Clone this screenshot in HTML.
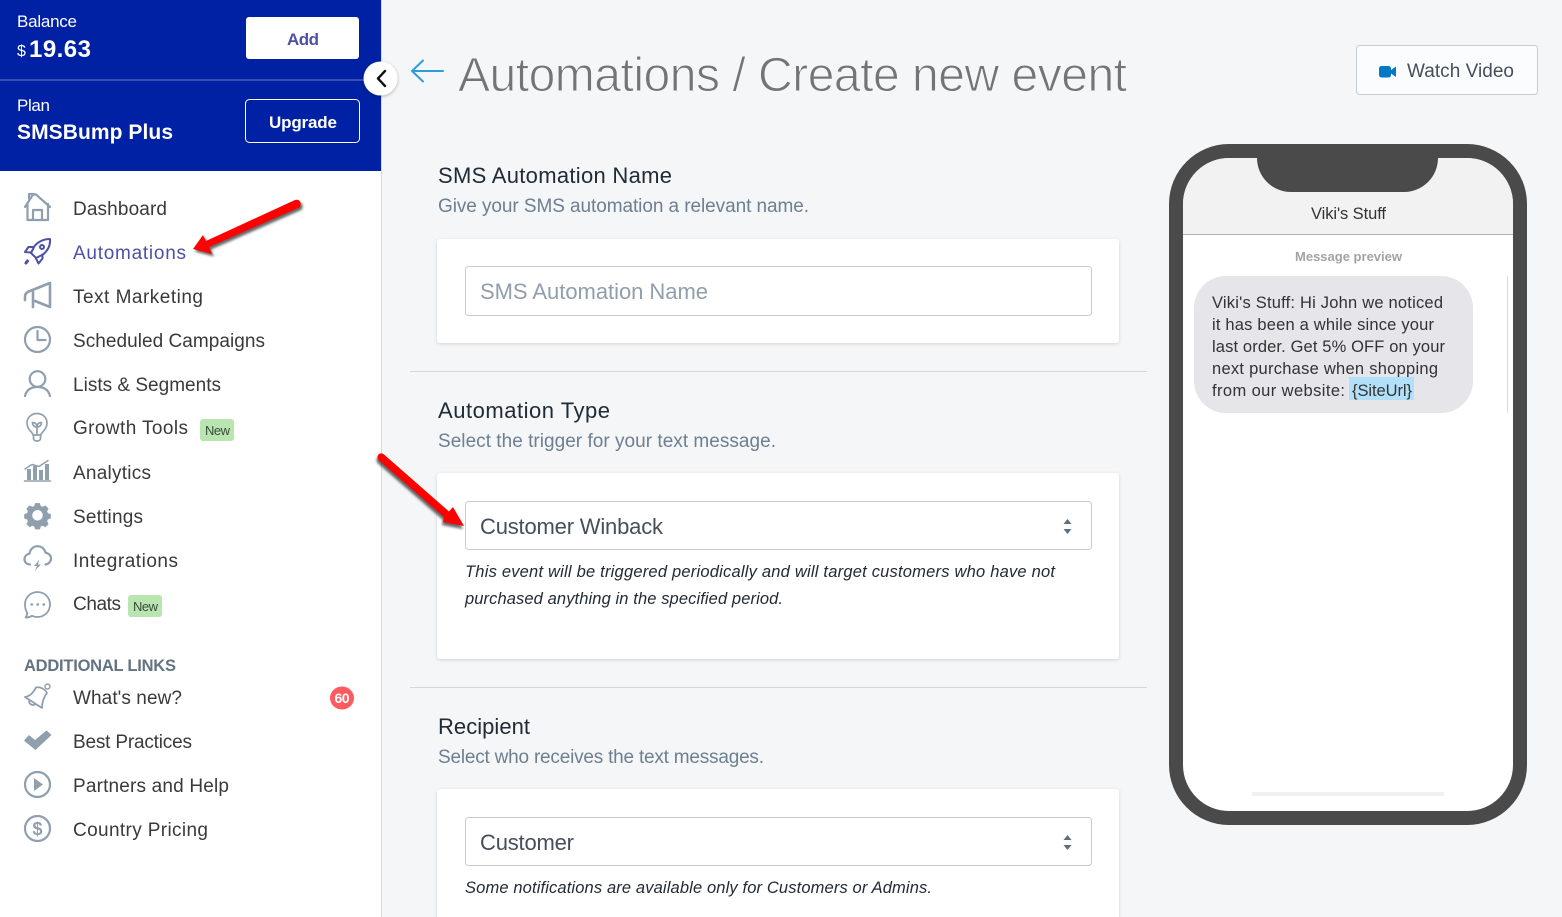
<!DOCTYPE html>
<html><head><meta charset="utf-8"><title>Automations</title>
<style>
html,body{margin:0;padding:0;background:#f4f6f8;width:1562px;height:917px;overflow:hidden}
svg{display:block}
text{font-family:"Liberation Sans",sans-serif}
.n{font-size:19px;fill:#3a3a3a}
.h{font-size:22px;fill:#212b36}
.s{font-size:19px;fill:#6d7f90}
.f{font-size:22px;fill:#454f5b}
.i{font-size:16.5px;font-style:italic;fill:#212b36}
.m{font-size:16.5px;fill:#333}
.ic{fill:none;stroke:#8f9fae;stroke-width:2.2;stroke-linecap:round;stroke-linejoin:round}
.card{fill:#fff;filter:url(#cs)}
.inp{fill:#fff;stroke:#c4cdd5;stroke-width:1}
.ar{fill:#5f6f80}
</style></head><body>
<svg width="1562" height="917" viewBox="0 0 1562 917" xmlns="http://www.w3.org/2000/svg">
<defs>
<filter id="cs" x="-5%" y="-10%" width="110%" height="120%"><feDropShadow dx="0" dy="1" stdDeviation="1.5" flood-color="#3f3f44" flood-opacity=".2"/></filter>
<filter id="ds" x="-30%" y="-30%" width="160%" height="160%"><feGaussianBlur stdDeviation="1.4"/></filter>
<filter id="cc" x="-40%" y="-40%" width="180%" height="180%"><feDropShadow dx="0" dy="1" stdDeviation="1.5" flood-color="#000" flood-opacity=".3"/></filter>
</defs>
<rect width="1562" height="917" fill="#f4f6f8"/>

<!-- sidebar -->
<rect x="0" y="0" width="381" height="917" fill="#fff"/>
<rect x="381" y="0" width="1" height="917" fill="#d5d8dc"/>
<rect x="0" y="0" width="381" height="171" fill="#0021a3"/>
<rect x="0" y="79" width="381" height="2" fill="#3c50b3"/>
<text x="17" y="27" font-size="17" fill="#fff" textLength="60">Balance</text>
<text x="17" y="56" font-size="16" fill="#fff" textLength="8">$</text>
<text x="29" y="57" font-size="24" font-weight="700" fill="#fff" textLength="62">19.63</text>
<rect x="246" y="17" width="113" height="42" rx="3" fill="#fff"/>
<text x="287" y="45" font-size="17" font-weight="700" fill="#4c51a5" textLength="32">Add</text>
<text x="17" y="111" font-size="17" fill="#fff" textLength="33">Plan</text>
<text x="17" y="139" font-size="21" font-weight="700" fill="#fff" textLength="156">SMSBump Plus</text>
<rect x="245.500" y="99.500" width="114" height="43" rx="4" fill="none" stroke="#fff"/>
<text x="269" y="128" font-size="17" font-weight="700" fill="#fff" textLength="68">Upgrade</text>

<circle cx="380.500" cy="78.500" r="17" fill="#fff" filter="url(#cc)"/>
<path d="M385 71l-7 7.500 7 7.500" fill="none" stroke="#111" stroke-width="2.400" stroke-linecap="round" stroke-linejoin="round"/>

<!-- nav labels -->
<text class="n" x="73" y="215" textLength="94">Dashboard</text>
<text class="n" x="73" y="259" textLength="113" style="fill:#4c51a5">Automations</text>
<text class="n" x="73" y="303" textLength="130">Text Marketing</text>
<text class="n" x="73" y="347" textLength="192">Scheduled Campaigns</text>
<text class="n" x="73" y="391" textLength="148">Lists &amp; Segments</text>
<text class="n" x="73" y="434" textLength="115">Growth Tools</text>
<text class="n" x="73" y="479" textLength="78">Analytics</text>
<text class="n" x="73" y="523" textLength="70">Settings</text>
<text class="n" x="73" y="567" textLength="105">Integrations</text>
<text class="n" x="73" y="610" textLength="48">Chats</text>
<text x="24" y="671" font-size="16.500" font-weight="700" fill="#637381" textLength="152">ADDITIONAL LINKS</text>
<text class="n" x="73" y="704" textLength="109">What's new?</text>
<text class="n" x="73" y="748" textLength="119">Best Practices</text>
<text class="n" x="73" y="792" textLength="156">Partners and Help</text>
<text class="n" x="73" y="836" textLength="135">Country Pricing</text>

<rect x="200" y="419" width="34" height="22" rx="3" fill="#b8e5b0"/>
<text x="205" y="435" font-size="13" fill="#3a4a3a" textLength="25">New</text>
<rect x="128" y="595" width="34" height="22" rx="3" fill="#b8e5b0"/>
<text x="133" y="611" font-size="13" fill="#3a4a3a" textLength="25">New</text>
<ellipse cx="342" cy="698" rx="12" ry="11.500" fill="#fd5b5f"/>
<text x="342" y="703" font-size="14" font-weight="700" fill="#fff" text-anchor="middle" textLength="15">60</text>

<!-- icons -->
<g class="ic">
<path d="M25 207L33 194.500h3L50 207M27.500 204V220H48V204M33 220V210H42V220M29 198.500V194H34"/>
<g style="stroke:#4c51a5;stroke-width:2">
<path d="M50 239c.5 6-1.500 11-7 15.500l-7 3.500-5-5 3.500-7c4.500-5 9.500-7 15.500-7z"/>
<path d="M32.500 247h-4l-3.500 5 6 .5M42.500 254.500v4l-4 5-2.500-5"/>
<circle cx="42" cy="247" r="2"/>
<path d="M27.500 261l-1.500 2" stroke-width="3"/>
</g>
<path d="M50 283V307L35 301M50 283L30 291C26.500 292 25 294 25 297V300M33 292V307" style="stroke-width:2.600"/>
<circle cx="37.500" cy="339.500" r="12.500"/>
<path d="M37.500 331v9h8"/>
<circle cx="37.500" cy="379" r="7.800"/>
<path d="M25 396c1.500-6 6-9 12.500-9s11 3 12.500 9"/>
<path d="M33 435c0-3-6-5-6-12 0-5.500 4.500-9.500 10-9.500s10 4 10 9.500c0 7-6 9-6 12zM33.500 435v3.500c0 1.500 1.500 2.500 3.500 2.500s3.500-1 3.500-2.500V435M37 435v-8M37 427c-3 0-4.500-2-4.500-4.500 2.500 0 4.500 1.500 4.500 4.500zM37 427c3 0 4.500-2 4.500-4.500-2.500 0-4.500 1.500-4.500 4.500z" style="stroke-width:1.700"/>
<path d="M24.500 481h26" style="stroke-width:1.500"/>
<path d="M25 469l7-4.500 7 2 9-6" style="stroke-width:1.500"/>
</g>
<g fill="#8f9fae">
<rect x="27" y="469" width="4" height="11"/><rect x="33" y="466" width="4" height="14"/><rect x="39" y="470" width="4" height="10"/><rect x="45" y="464" width="4" height="16"/>
<g transform="translate(37.5 515.3) scale(.81) translate(-37.5 -516)">
<path fill-rule="evenodd" d="M34.500 501h6l1 3.500 2.500 1 3.200-1.800 4 4-1.800 3.200 1 2.500 3.500 1v5.600l-3.500 1-1 2.500 1.800 3.200-4 4-3.200-1.800-2.500 1-1 3.500h-6l-1-3.500-2.500-1-3.200 1.800-4-4 1.800-3.200-1-2.500-3.500-1v-5.600l3.500-1 1-2.500-1.800-3.200 4-4 3.200 1.800 2.500-1zM37.500 509.500a6.500 6.500 0 1 0 0 13a6.500 6.500 0 0 0 0-13z"/>
</g>
<path d="M39.500 559.500l-5.500 6.500h3l-2 4.500 6-6h-3.200z"/>
<path d="M25 740.500l4-4.500 6 5 11.500-9.500 4 3.500-15 14z" stroke="#8f9fae" stroke-width="1.500" stroke-linejoin="round"/>
<path d="M34 778v13l9-6.500z"/>
</g>
<g class="ic">
<path d="M30 564.500c-3.500-.3-5.500-2.500-5.500-5.300 0-2.800 2-5 5-5.500.5-4.500 4-7.500 8-7.500s7 2.500 8 6.500c3 .5 5.500 2.600 5.500 5.800 0 3-2.500 5.700-5.500 6"/>
<path d="M27.500 613.500c-1.500-2.500-2.500-5-2.500-9 0-7 5.500-12.500 12.500-12.500s12.500 5.500 12.500 12.500-5.500 12.500-12.500 12.500c-2 0-4-.5-5.500-1.200-2 1.200-4 2-6.500 1.700 1-1 1.500-2.500 1.500-4z" style="stroke-width:1.800"/>
<path d="M31.500 604.500h.5M37.500 604.500h.5M43.500 604.500h.5" style="stroke-width:2.400"/>
<path d="M25 697C31 696 34 691.500 36 687.500C40 686.500 45 689 47 693C44 697 42 702 42 708ZM29.500 700C28 704 33 706.500 35.500 704" style="stroke-width:1.800"/>
<circle cx="47.500" cy="686.500" r="2.500" style="stroke-width:1.400"/>
<circle cx="37.500" cy="784.500" r="12.500"/>
<circle cx="37.500" cy="828.500" r="12.500"/>
</g>
<text x="37.500" y="835" font-size="18" font-weight="700" fill="#8f9fae" text-anchor="middle">$</text>

<!-- header -->
<path d="M412 71h31M423 60.500L412 71l11 10.500" fill="none" stroke="#2e9fd6" stroke-width="2" stroke-linecap="round" stroke-linejoin="round"/>
<text x="458" y="91" font-size="48" fill="#747474" stroke="#f4f6f8" stroke-width="1" textLength="669">Automations / Create new event</text>
<rect x="1356.500" y="45.500" width="181" height="49" rx="3" fill="#fbfcfd" stroke="#c4cdd5"/>
<rect x="1379" y="66" width="12" height="11.500" rx="2.500" fill="#0079c4"/>
<path d="M1391 70l5-3.500v10.500l-5-3.500z" fill="#0079c4"/>
<text x="1407" y="77" font-size="19" fill="#454f5b" textLength="107">Watch Video</text>

<!-- section 1 -->
<text class="h" x="438" y="183" textLength="234">SMS Automation Name</text>
<text class="s" x="438" y="212" textLength="371">Give your SMS automation a relevant name.</text>
<rect class="card" x="437" y="239" width="682" height="104" rx="3"/>
<rect class="inp" x="465.500" y="266.500" width="626" height="49" rx="3"/>
<text x="480" y="299" font-size="22" fill="#919eab" textLength="228">SMS Automation Name</text>
<rect x="410" y="371" width="737" height="1" fill="#d3d8dc"/>

<!-- section 2 -->
<text class="h" x="438" y="418" textLength="172">Automation Type</text>
<text class="s" x="438" y="447" textLength="338">Select the trigger for your text message.</text>
<rect class="card" x="437" y="473" width="682" height="186" rx="3"/>
<rect class="inp" x="465.500" y="501.500" width="626" height="48" rx="3"/>
<text class="f" x="480" y="534" textLength="183">Customer Winback</text>
<path class="ar" d="M1067.500 519l4 5h-8zM1067.500 534l4-5h-8z"/>
<text class="i" x="465" y="577" textLength="590">This event will be triggered periodically and will target customers who have not</text>
<text class="i" x="465" y="604" textLength="318">purchased anything in the specified period.</text>
<rect x="410" y="687" width="737" height="1" fill="#d3d8dc"/>

<!-- section 3 -->
<text class="h" x="438" y="734" textLength="92">Recipient</text>
<text class="s" x="438" y="763" textLength="326">Select who receives the text messages.</text>
<rect class="card" x="437" y="789" width="682" height="140" rx="3"/>
<rect class="inp" x="465.500" y="817.500" width="626" height="48" rx="3"/>
<text class="f" x="480" y="850" textLength="94">Customer</text>
<path class="ar" d="M1067.500 835l4 5h-8zM1067.500 850l4-5h-8z"/>
<text class="i" x="465" y="893" textLength="467">Some notifications are available only for Customers or Admins.</text>

<!-- phone -->
<rect x="1169" y="144" width="358" height="681" rx="60" fill="#4a4a4a"/>
<rect x="1183" y="158" width="330" height="653" rx="46" fill="#fff"/>
<path d="M1183 234V204a46 46 0 0 1 46-46H1467a46 46 0 0 1 46 46V234z" fill="#f2f2f2"/>
<rect x="1183" y="234" width="330" height="1" fill="#b0b0b0"/>
<path d="M1257 158H1438V158a34 34 0 0 1-34 34H1291a34 34 0 0 1-34-34z" fill="#4a4a4a"/>
<text x="1311" y="219" font-size="16.500" fill="#333" textLength="75">Viki's Stuff</text>
<text x="1295" y="261" font-size="13" font-weight="700" fill="#a3a3a3" textLength="107">Message preview</text>
<rect x="1194" y="276" width="279" height="137" rx="32" fill="#e5e5ea"/>
<rect x="1507" y="276" width="1" height="137" fill="#d8dbe0"/>
<text class="m" x="1212" y="308" textLength="231">Viki's Stuff: Hi John we noticed</text>
<text class="m" x="1212" y="330" textLength="222">it has been a while since your</text>
<text class="m" x="1212" y="352" textLength="233">last order. Get 5% OFF on your</text>
<text class="m" x="1212" y="374" textLength="226">next purchase when shopping</text>
<text class="m" x="1212" y="396" textLength="133">from our website:</text>
<rect x="1349" y="377" width="65" height="23" fill="#b3e0f9"/>
<text class="m" x="1352" y="396" textLength="60">{SiteUrl}</text>
<rect x="1252" y="792" width="192" height="4" fill="#f1f1f1"/>

<!-- red arrows -->
<g>
<path d="M193 249L203 235L206 241L295 200Q299 199 300.500 202.500Q301 206 299 207.500L209 247L212 254Z" fill="#333" opacity=".75" filter="url(#ds)" transform="translate(2,2.500)"/>
<path d="M193 249L203 235L206 241L295 200Q299 199 300.500 202.500Q301 206 299 207.500L209 247L212 254Z" fill="#f00"/>
<path d="M464 526L453 507L449 511.500L384 454.500Q381 452 378.500 454.500Q376.500 457 378.500 460L444 517L443 522Z" fill="#333" opacity=".75" filter="url(#ds)" transform="translate(-1,3)"/>
<path d="M464 526L453 507L449 511.500L384 454.500Q381 452 378.500 454.500Q376.500 457 378.500 460L444 517L443 522Z" fill="#f00"/>
</g>
</svg>
</body></html>
